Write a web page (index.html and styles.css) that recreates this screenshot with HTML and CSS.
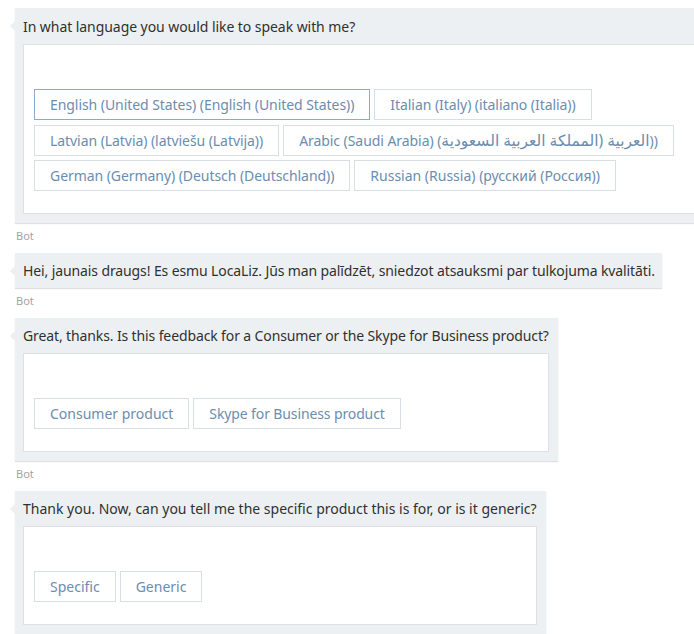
FILE: index.html
```html
<!DOCTYPE html>
<html lang="en">
<head>
<meta charset="utf-8">
<title>Bot chat</title>
<link rel="stylesheet" href="styles.css">
</head>
<body>
<div class="chat">
  <div class="msg">
    <div class="bubble bubble-wide">
      <div class="bubble-text text-tight">In what language you would like to speak with me?</div>
      <div class="card">
        <div class="actions">
          <button class="choice text-tight is-focused">English (United States) (English (United States))</button>
          <button class="choice text-tight">Italian (Italy) (italiano (Italia))</button>
          <button class="choice text-tight">Latvian (Latvia) (latviešu (Latvija))</button>
          <button class="choice text-tight">Arabic (Saudi Arabia) (<span class="ar">العربية (المملكة العربية السعودية</span>))</button>
          <button class="choice text-tight">German (Germany) (Deutsch (Deutschland))</button>
          <button class="choice">Russian (Russia) (русский (Россия))</button>
        </div>
      </div>
    </div>
    <div class="sender">Bot</div>
  </div>

  <div class="msg">
    <div class="bubble bubble-plain">
      <div class="bubble-text text-narrow">Hei, jaunais draugs! Es esmu LocaLiz. Jūs man palīdzēt, sniedzot atsauksmi par tulkojuma kvalitāti.</div>
    </div>
    <div class="sender">Bot</div>
  </div>

  <div class="msg">
    <div class="bubble">
      <div class="bubble-text text-mid">Great, thanks. Is this feedback for a Consumer or the Skype for Business product?</div>
      <div class="card">
        <div class="actions">
          <button class="choice">Consumer product</button>
          <button class="choice text-mid">Skype for Business product</button>
        </div>
      </div>
    </div>
    <div class="sender">Bot</div>
  </div>

  <div class="msg">
    <div class="bubble">
      <div class="bubble-text">Thank you. Now, can you tell me the specific product this is for, or is it generic?</div>
      <div class="card">
        <div class="actions">
          <button class="choice">Specific</button>
          <button class="choice">Generic</button>
        </div>
      </div>
    </div>
  </div>
</div>
</body>
</html>
```

FILE: styles.css
```css
html, body {
  margin: 0;
  padding: 0;
  background: #ffffff;
  overflow: hidden;
}

body {
  font-family: "Noto Sans", "Open Sans", "DejaVu Sans", sans-serif;
  color: #333333;
}

.chat {
  padding: 8px 0 0 15px;
  display: flex;
  flex-direction: column;
}

.msg {
  display: flex;
  flex-direction: column;
  align-items: flex-start;
}

.bubble {
  position: relative;
  background: #edf0f3;
  padding: 0 9px 9px 8px;
  box-shadow: 0 1px 1px rgba(0, 0, 0, 0.12);
  display: flex;
  flex-direction: column;
}

.bubble::before {
  content: "";
  position: absolute;
  left: -5px;
  top: 13px;
  border-top: 5px solid transparent;
  border-bottom: 5px solid transparent;
  border-right: 5px solid #edf0f3;
}

.bubble-wide {
  width: 720px;
}

.bubble-wide .bubble-text {
  height: 36px;
  line-height: 37px;
}

.bubble-plain {
  padding-bottom: 0;
  padding-right: 7px;
}

.bubble-text {
  font-size: 14px;
  height: 35px;
  line-height: 36px;
  white-space: nowrap;
  color: #303030;
}

.text-tight {
  letter-spacing: -0.06px;
}

.text-narrow {
  letter-spacing: -0.11px;
}

.text-mid {
  letter-spacing: -0.12px;
}

.card {
  background: #ffffff;
  border: 1px solid #dde1e5;
  padding: 44px 10px 22px 10px;
}

.actions {
  display: flex;
  flex-wrap: wrap;
  gap: 4.5px 4px;
}

.choice {
  font-family: inherit;
  font-size: 14px;
  height: 31px;
  padding: 0 15px;
  background: #ffffff;
  border: 1px solid #d8dee4;
  color: #6b8db0;
  white-space: nowrap;
  cursor: pointer;
}

.ar {
  unicode-bidi: isolate;
  direction: rtl;
  font-size: 15.5px;
  letter-spacing: 0;
}

.choice.is-focused {
  border-color: #8eaac4;
}

.sender {
  font-size: 11px;
  line-height: 16px;
  color: #a3a3a3;
  margin: 5px 0 9px 1px;
}
```
